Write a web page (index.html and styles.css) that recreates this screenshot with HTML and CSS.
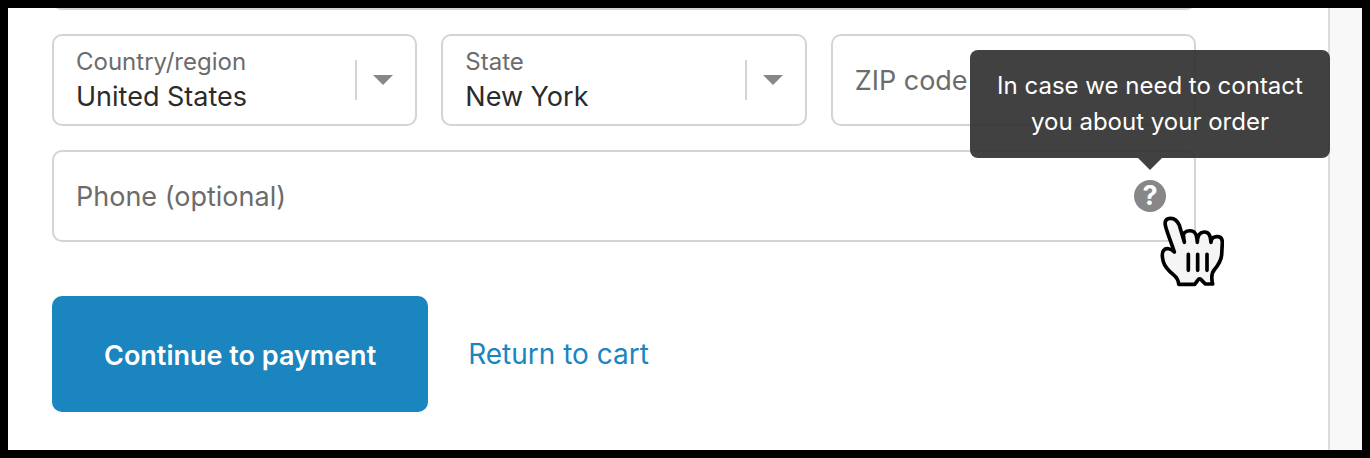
FILE: index.html
```html
<!DOCTYPE html>
<html lang="en">
<head>
<meta charset="UTF-8">
<meta name="viewport" content="width=device-width, initial-scale=1.0">
<title>Checkout</title>
<link rel="stylesheet" href="styles.css">
</head>
<body>
<div class="page">
  <main class="main">
    <form class="checkout-form">
      <div class="field field-city">
        <input class="control" type="text" id="city" name="city" aria-label="City">
      </div>

      <div class="row">
        <div class="field">
          <select class="control select" id="country" name="country">
            <option>United States</option>
          </select>
          <label class="field-label" for="country">Country/region</label>
          <span class="caret"></span>
        </div>
        <div class="field">
          <select class="control select" id="state" name="state">
            <option>New York</option>
          </select>
          <label class="field-label" for="state">State</label>
          <span class="caret"></span>
        </div>
        <div class="field">
          <input class="control" type="text" id="zip" name="zip" placeholder="ZIP code" aria-label="ZIP code">
        </div>
      </div>

      <div class="field">
        <input class="control" type="tel" id="phone" name="phone" placeholder="Phone (optional)" aria-label="Phone (optional)">
        <div class="help">
          <button class="help-btn" type="button" aria-describedby="phone-tip">?</button>
          <div class="tooltip" id="phone-tip" role="tooltip">In case we need to contact you about your order</div>
          <svg class="pointer" viewBox="180 228 192 213" aria-hidden="true">
            <path d="M223 336 C215 311 204 285 197 260 C192 243 199 235 212 235 C224 235 232 242 238 256 L253 307 L250 284 C254 274 266 271 276 273 C286 275 291 283 292 307 C292 290 298 277 312 276 C326 275 332 286 333 307 C333 294 342 289 353 290 C363 291 367 296 367 307 L365 345 C363 363 353 377 344 388 C334 399 333 412 338 432 L316 432 L306 422 C302 415 297 415 293 421 L284 433 L236 433 C236 422 231 413 220 404 C207 393 194 379 190 365 C186 350 184 338 191 331 C198 323 212 325 223 336 Z" fill="#f5f5f5" stroke="#000" stroke-width="11" stroke-linejoin="round"/>
            <path d="M265 343 V391 M293 343 V391 M321 343 V391" fill="none" stroke="#000" stroke-width="11" stroke-linecap="round"/>
          </svg>
        </div>
      </div>

      <div class="actions">
        <button class="continue-btn" type="submit">Continue to payment</button>
        <a class="return-link" href="#cart">Return to cart</a>
      </div>
    </form>
  </main>
  <aside class="sidebar"></aside>
</div>
</body>
</html>
```

FILE: styles.css
```css
* {
  box-sizing: border-box;
}

body {
  margin: 0;
  font-family: Inter, "Liberation Sans", sans-serif;
  font-size: 27px;
  color: #333;
}

.page {
  display: flex;
  min-height: 100vh;
  border: 8px solid #000;
  overflow: hidden;
}

.main {
  flex: 1;
  padding: 0 132px 0 44px;
  background-color: #fff;
}

.sidebar {
  width: 34px;
  border-left: 2px solid #dcdcdc;
  background-color: #f8f8f8;
}

.checkout-form {
  display: flex;
  flex-direction: column;
  gap: 24px;
}

/* scrolled mostly out of view */
.field-city {
  margin-top: -90px;
}

.row {
  display: grid;
  grid-template-columns: repeat(3, 1fr);
  gap: 24px;
}

/* control, label and icons share one cell */
.field {
  display: grid;
}

.field > * {
  grid-area: 1 / 1;
}

.control {
  width: 100%;
  height: 92px;
  padding: 0 22px;
  border: 2px solid #d4d4d4;
  border-radius: 10px;
  background-color: #fff;
  color: #2b2b2b;
  font: inherit;
}

.control::placeholder {
  color: #6c6c6c;
  opacity: 1;
}

.select {
  appearance: none;
  padding-top: 32px;
}

.field-label {
  align-self: start;
  justify-self: start;
  padding: 12px 24px 0;
  font-size: 24px;
  line-height: 32px;
  color: #6c6c6c;
  pointer-events: none;
}

.caret {
  align-self: center;
  justify-self: end;
  display: flex;
  align-items: center;
  height: 40px;
  margin-right: 24px;
  padding-left: 16px;
  border-left: 2px solid #d4d4d4;
  pointer-events: none;
}

.caret::after {
  content: "";
  border: 10px solid transparent;
  border-top-color: #878787;
  border-bottom: 0;
}

.help {
  position: relative;
  align-self: center;
  justify-self: end;
  margin-right: 30px;
}

.help-btn {
  display: block;
  width: 32px;
  height: 32px;
  padding: 0;
  border: none;
  border-radius: 50%;
  background-color: #878787;
  color: #fff;
  font: bold 27px/32px Inter, "Liberation Sans", sans-serif;
  cursor: pointer;
}

.tooltip {
  position: absolute;
  bottom: 54px;
  left: 50%;
  width: 360px;
  margin-left: -180px;
  padding: 18px 24px;
  border-radius: 8px;
  background-color: rgba(51, 51, 51, 0.93);
  color: #fff;
  font-size: 24px;
  line-height: 36px;
  text-align: center;
}

.tooltip::after {
  content: "";
  position: absolute;
  top: 100%;
  left: 50%;
  margin-left: -12px;
  border: 12px solid transparent;
  border-top-color: rgba(51, 51, 51, 0.93);
  border-bottom: 0;
}

.pointer {
  position: absolute;
  top: 36px;
  left: 26px;
  width: 64px;
  height: 71px;
}

.actions {
  display: flex;
  align-items: center;
  gap: 40px;
  margin-top: 30px;
}

.continue-btn {
  padding: 44px 52px 40px;
  border: none;
  border-radius: 10px;
  background-color: #1a85bf;
  color: #fff;
  font-family: inherit;
  font-size: 27px;
  font-weight: 600;
  line-height: 32px;
  cursor: pointer;
}

.continue-btn:hover {
  background-color: #16719f;
}

.return-link {
  color: #1a85bf;
  font-size: 28px;
  text-decoration: none;
}
```
